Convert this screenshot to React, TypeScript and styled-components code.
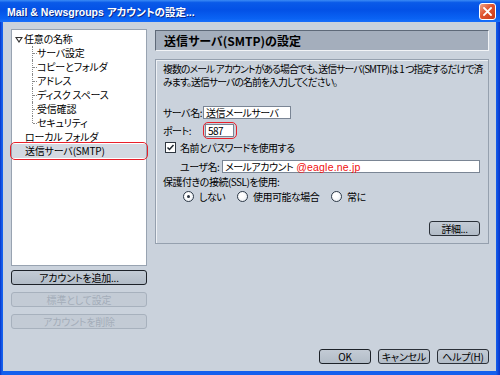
import React from "react";
import styled, { createGlobalStyle, css } from "styled-components";

const GlobalStyle = createGlobalStyle`
  html, body {
    margin: 0;
    padding: 0;
    background: #ffffff;
  }
  body {
    font-family: "Noto Sans CJK JP", "DejaVu Sans", sans-serif;
    font-size: 10px;
    letter-spacing: -0.2px;
    color: #000;
    font-feature-settings: "palt";
  }
`;

const Window = styled.div`
  width: 500px;
  height: 375px;
  box-sizing: border-box;
  display: flex;
  flex-direction: column;
  padding: 0 4px 4px 3px;
  background: linear-gradient(to right, #0733c8 0px, #1460ee 2px, #1460ee 496px, #0733c8 500px);
`;

const TitleBar = styled.div`
  height: 22px;
  margin: 0 -4px 0 -3px;
  padding: 0 4px 0 7px;
  display: flex;
  align-items: center;
  justify-content: space-between;
  background: linear-gradient(
    to bottom,
    #3b8bf5 0%,
    #0a5ae8 12%,
    #0351e6 45%,
    #0a63f4 85%,
    #1a6ffa 100%
  );
`;

const Title = styled.span`
  color: #fff;
  font-family: "Liberation Sans", "Noto Sans CJK JP", sans-serif;
  font-weight: bold;
  font-size: 10.5px;
  letter-spacing: 0;
  text-shadow: 1px 1px 0 #0a2a8a;
  white-space: nowrap;
`;

const CloseButton = styled.div`
  width: 15px;
  height: 15px;
  border: 1px solid #fff;
  border-radius: 3px;
  background: linear-gradient(135deg, #f0a58a 0%, #e0542f 45%, #c7391a 100%);
  display: flex;
  align-items: center;
  justify-content: center;
`;

const Body = styled.div`
  flex: 1;
  background: #cad2dc;
  display: flex;
  flex-direction: column;
  padding: 7px 7px 7px 8px;
  min-width: 0;
`;

const Main = styled.div`
  flex: 1;
  display: flex;
  gap: 8px;
  min-width: 0;
`;

const LeftColumn = styled.div`
  width: 136px;
  flex: none;
  display: flex;
  flex-direction: column;
`;

const Tree = styled.div`
  height: 237px;
  box-sizing: border-box;
  background: #fff;
  border: 1px solid #98a3b1;
  padding-top: 2px;
  margin-bottom: 4px;
`;

const TreeRow = styled.div<{ $indent: number; $selected?: boolean }>`
  height: 14px;
  line-height: 14px;
  padding-left: ${(p) => p.$indent}px;
  position: relative;
  white-space: nowrap;
  ${(p) =>
    p.$selected &&
    css`
      background: #d3d9e1;
      &::after {
        content: "";
        position: absolute;
        left: -2px;
        right: -2px;
        top: -2px;
        bottom: -2px;
        border: 1.5px solid #e8202a;
        border-radius: 5px;
      }
    `}
`;

const Branch = styled.span<{ $last?: boolean }>`
  position: absolute;
  left: 20px;
  top: 0;
  width: 5px;
  height: ${(p) => (p.$last ? "7px" : "14px")};
  border-left: 1px dotted #8a8a8a;
  &::after {
    content: "";
    position: absolute;
    left: 0;
    top: 7px;
    width: 4px;
    border-top: 1px dotted #8a8a8a;
  }
`;

const Expander = styled.span`
  display: inline-block;
  width: 0;
  height: 0;
  margin: 0 1px 1px 0;
  border-left: 4px solid transparent;
  border-right: 4px solid transparent;
  border-top: 6px solid #333;
  vertical-align: middle;
  position: relative;
  &::after {
    content: "";
    position: absolute;
    left: -2px;
    top: -5px;
    border-left: 2px solid transparent;
    border-right: 2px solid transparent;
    border-top: 3px solid #fff;
  }
`;

const Button = styled.div<{ $default?: boolean; $disabled?: boolean; $width?: number }>`
  height: 15px;
  box-sizing: border-box;
  width: ${(p) => (p.$width ? `${p.$width}px` : "100%")};
  display: flex;
  align-items: center;
  justify-content: center;
  border-radius: 3px;
  font-size: 10px;
  white-space: nowrap;
  border: ${(p) => (p.$default ? "1.5px solid #1c2128" : "1px solid #2a3038")};
  background: linear-gradient(to bottom, #c3cbd5 0%, #b2bcc7 100%);
  color: #000;
  ${(p) =>
    p.$disabled &&
    css`
      border: 1px solid #a7b1bd;
      background: #c3cbd5;
      color: #a3adb9;
    `}
`;

const SideButtons = styled.div`
  display: flex;
  flex-direction: column;
  gap: 7px;
`;

const RightColumn = styled.div`
  flex: 1;
  min-width: 0;
  display: flex;
  flex-direction: column;
  padding-top: 1px;
`;

const Header = styled.div`
  height: 21px;
  box-sizing: border-box;
  background: #a4aebc;
  border-top: 1px solid #5e6978;
  border-left: 1px solid #5e6978;
  border-bottom: 1px solid #f2f4f7;
  border-right: 1px solid #f2f4f7;
  padding-left: 8px;
  display: flex;
  align-items: center;
  font-weight: bold;
  font-size: 12px;
  letter-spacing: 0;
  margin-bottom: 8px;
`;

const Panel = styled.div`
  height: 185px;
  box-sizing: border-box;
  border: 1px solid #95a0ae;
  box-shadow: inset 1px 1px 0 #eef1f5;
  padding: 3px 8px 0 7px;
  display: flex;
  flex-direction: column;
  letter-spacing: -0.5px;
`;

const Description = styled.div`
  line-height: 12.5px;
  font-size: 9.8px;
  letter-spacing: -0.85px;
  white-space: nowrap;
  margin-bottom: 17px;
`;

const FieldRow = styled.div<{ $indent?: number; $mb?: number }>`
  display: flex;
  align-items: center;
  height: 15px;
  padding-left: ${(p) => p.$indent ?? 0}px;
  margin-bottom: ${(p) => p.$mb ?? 3}px;
  white-space: nowrap;
`;

const Label = styled.span<{ $width?: number }>`
  display: inline-block;
  flex: none;
  width: ${(p) => (p.$width ? `${p.$width}px` : "auto")};
`;

const Input = styled.div<{ $width?: number; $mark?: boolean }>`
  height: 13px;
  box-sizing: border-box;
  width: ${(p) => (p.$width ? `${p.$width}px` : "auto")};
  flex: ${(p) => (p.$width ? "none" : 1)};
  background: #fff;
  border: 1px solid #7a8594;
  line-height: 11px;
  padding-left: 2px;
  position: relative;
  ${(p) =>
    p.$mark &&
    css`
      &::after {
        content: "";
        position: absolute;
        left: -3px;
        right: -4px;
        top: -3px;
        bottom: -3px;
        border: 1.5px solid #e8202a;
        border-radius: 5px;
      }
    `}
`;

const Red = styled.span`
  color: #f01010;
  font-family: "Liberation Sans", sans-serif;
  font-size: 10.5px;
  letter-spacing: 0.2px;
  margin-left: 3px;
`;

const Checkbox = styled.span`
  width: 11px;
  height: 11px;
  box-sizing: border-box;
  border: 1px solid #2e3640;
  background: #fff;
  margin-right: 4px;
  display: inline-flex;
  align-items: center;
  justify-content: center;
`;

const RadioGroup = styled.div`
  display: flex;
  align-items: center;
  padding-left: 20px;
  height: 15px;
  white-space: nowrap;
`;

const RadioOption = styled.label<{ $width: number }>`
  display: flex;
  align-items: center;
  width: ${(p) => p.$width}px;
`;

const Radio = styled.span<{ $checked?: boolean }>`
  width: 11px;
  height: 11px;
  box-sizing: border-box;
  border-radius: 50%;
  border: 1px solid #2e3a48;
  background: radial-gradient(circle at 40% 40%, #ffffff 30%, #dfe5ec 100%);
  margin-right: 5px;
  display: inline-flex;
  align-items: center;
  justify-content: center;
  &::after {
    content: "";
    width: 3px;
    height: 3px;
    border-radius: 50%;
    background: ${(p) => (p.$checked ? "#2a3340" : "transparent")};
  }
`;

const PanelFooter = styled.div`
  margin-top: auto;
  margin-bottom: 7px;
  display: flex;
  justify-content: flex-end;
`;

const Footer = styled.div`
  display: flex;
  justify-content: flex-end;
  gap: 7px;
`;

const CloseIcon = () => (
  <svg width="9" height="9" viewBox="0 0 9 9">
    <path d="M1 1 L8 8 M8 1 L1 8" stroke="#fff" strokeWidth="1.8" strokeLinecap="square" />
  </svg>
);

const CheckIcon = () => (
  <svg width="9" height="9" viewBox="0 0 9 9">
    <path d="M1.5 4.5 L3.5 6.5 L7.5 2" stroke="#1f2730" strokeWidth="1.5" fill="none" />
  </svg>
);

const children = ["サーバ設定", "コピーとフォルダ", "アドレス", "ディスク スペース", "受信確認", "セキュリティ"];

export default function App() {
  return (
    <>
      <GlobalStyle />
      <Window>
        <TitleBar>
          <Title>Mail &amp; Newsgroups アカウントの設定...</Title>
          <CloseButton>
            <CloseIcon />
          </CloseButton>
        </TitleBar>
        <Body>
          <Main>
            <LeftColumn>
              <Tree>
                <TreeRow $indent={3}>
                  <Expander />
                  任意の名称
                </TreeRow>
                {children.map((c, i) => (
                  <TreeRow key={c} $indent={25}>
                    <Branch $last={i === children.length - 1} />
                    {c}
                  </TreeRow>
                ))}
                <TreeRow $indent={13}>ローカル フォルダ</TreeRow>
                <TreeRow $indent={13} $selected>
                  送信サーバ(SMTP)
                </TreeRow>
              </Tree>
              <SideButtons>
                <Button $default>アカウントを追加...</Button>
                <Button $disabled>標準として設定</Button>
                <Button $disabled>アカウントを削除</Button>
              </SideButtons>
            </LeftColumn>
            <RightColumn>
              <Header>送信サーバ(SMTP)の設定</Header>
              <Panel>
                <Description>
                  複数のメール アカウントがある場合でも、送信サーバ(SMTP)は 1 つ指定するだけで済
                  <br />
                  みます。送信サーバの名前を入力してください。
                </Description>
                <FieldRow>
                  <Label $width={40}>サーバ名:</Label>
                  <Input $width={88}>送信メールサーバ</Input>
                </FieldRow>
                <FieldRow $mb={2}>
                  <Label $width={42}>ポート:</Label>
                  <Input $width={29} $mark>
                    587
                  </Input>
                </FieldRow>
                <FieldRow $indent={2} $mb={4}>
                  <Checkbox>
                    <CheckIcon />
                  </Checkbox>
                  名前とパスワードを使用する
                </FieldRow>
                <FieldRow $indent={17} $mb={0}>
                  <Label $width={42}>ユーザ名:</Label>
                  <Input>
                    メールアカウント<Red>@eagle.ne.jp</Red>
                  </Input>
                </FieldRow>
                <FieldRow $mb={0}>保護付きの接続(SSL)を使用:</FieldRow>
                <RadioGroup>
                  <RadioOption $width={54}>
                    <Radio $checked />
                    しない
                  </RadioOption>
                  <RadioOption $width={94}>
                    <Radio />
                    使用可能な場合
                  </RadioOption>
                  <RadioOption $width={50}>
                    <Radio />
                    常に
                  </RadioOption>
                </RadioGroup>
                <PanelFooter>
                  <Button $width={51}>詳細...</Button>
                </PanelFooter>
              </Panel>
            </RightColumn>
          </Main>
          <Footer>
            <Button $default $width={52}>
              OK
            </Button>
            <Button $width={52}>キャンセル</Button>
            <Button $width={52}>ヘルプ(H)</Button>
          </Footer>
        </Body>
      </Window>
    </>
  );
}
